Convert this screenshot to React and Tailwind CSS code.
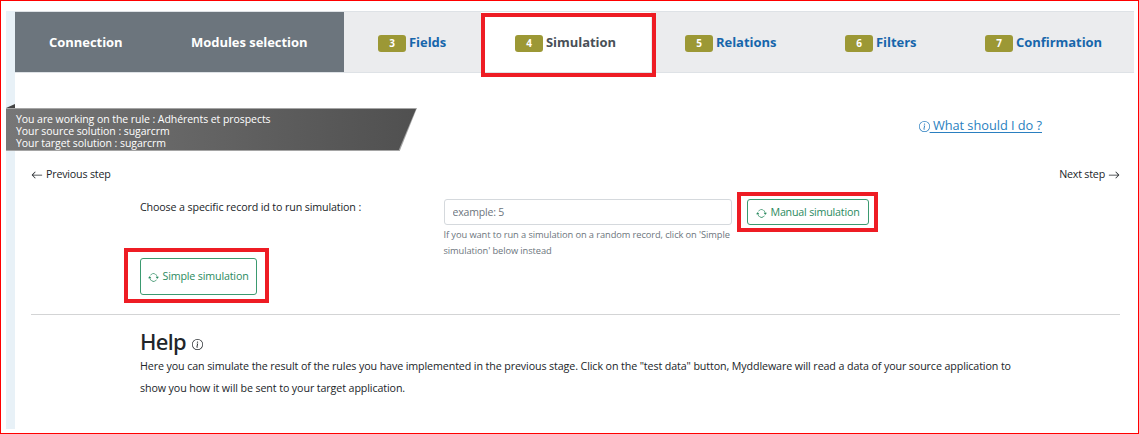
import React from "react";
import { BsInfoCircle, BsArrowRepeat, BsArrowLeft, BsArrowRight } from "react-icons/bs";

const tabs = [
  { label: "Connection", width: "w-[142px]", done: true },
  { label: "Modules selection", width: "w-[187px]", done: true },
  { label: "Fields", step: 3, width: "w-[137px]" },
  { label: "Simulation", step: 4, width: "w-[170px]", active: true },
  { label: "Relations", step: 5, width: "w-[160px]" },
  { label: "Filters", step: 6, width: "w-[140px]" },
  { label: "Confirmation", step: 7, width: "flex-1" },
];

function Tab({ label, step, width, done, active }) {
  const tone = done
    ? "bg-[#6c757d] text-white"
    : active
      ? "z-10 bg-white text-[#495057]"
      : "bg-[#ebecee] text-[#1766ab]";
  return (
    <div className={`relative flex shrink-0 items-center pl-[34px] ${width} ${tone}`}>
      {step && (
        <span className="mr-[3px] mt-[3px] flex h-[17px] w-[28px] shrink-0 items-center justify-center rounded-[3px] bg-[#9c9835] text-[10px] font-bold text-white">
          {step}
        </span>
      )}
      <span className="whitespace-nowrap text-[13px] font-bold leading-5 tracking-[-0.04px]">{label}</span>
      {active && <div className="absolute left-0 top-px h-[64px] w-[175px] border-4 border-[#ee1c24]" />}
    </div>
  );
}

export default function App() {
  return (
    <div className="flex h-[434px] w-[1139px] overflow-hidden border border-[#ff0000] bg-white pl-[5px] pt-[10px] font-['Open_Sans','Noto_Sans',sans-serif] text-[10.7px] text-[#212529]">
      <div className="h-[418px] w-[9px] shrink-0 bg-[#e8f1f7]" />
      <main className="w-[1119px] shrink-0">
        <nav className="flex h-[62px] border-y border-[#dee2e6]">
          {tabs.map((t) => (
            <Tab key={t.label} {...t} />
          ))}
        </nav>

        <header className="flex h-[78px] items-start justify-between pt-[31px]">
          <div className="-ml-[9px]">
            <div className="h-[4px] w-[9px] bg-[#444] [clip-path:polygon(0_100%,100%_0,100%_100%)]" />
            <div className="h-[43px] w-[411px] bg-[#a5a5a5] py-px [clip-path:polygon(0_0,100%_0,95.8%_100%,0_100%)]">
              <div className="h-[41px] w-[410px] whitespace-nowrap bg-linear-to-r from-[#777] to-[#505050] pl-[10px] pt-[4px] text-[10.5px] leading-[12.2px] tracking-[-0.06px] text-white [clip-path:polygon(0_0,100%_0,95.8%_100%,0_100%)]">
                <p>You are working on the rule : Adhérents et prospects</p>
                <p>Your source solution : sugarcrm</p>
                <p>Your target solution : sugarcrm</p>
              </div>
            </div>
          </div>
          <a className="mr-[92px] mt-[11px] flex items-center text-[12.8px] leading-5 tracking-[-0.04px] text-[#2a7fc0]">
            <BsInfoCircle className="mt-[3px] size-[11px]" />
            <span className="whitespace-pre underline underline-offset-2"> What should I do ?</span>
          </a>
        </header>

        <div className="ml-4 mr-[14px] flex h-[46px] items-center justify-between tracking-[-0.2px]">
          <span className="flex items-center gap-[3px]">
            <BsArrowLeft className="mt-[2px] size-[12px]" />
            Previous step
          </span>
          <span className="flex items-center gap-[3px]">
            Next step
            <BsArrowRight className="mt-[2px] size-[12px]" />
          </span>
        </div>

        <section className="ml-4 mr-[14px] h-[118px] border-b border-[#d3d4d5] pl-[109px] pt-[2px]">
          <div className="flex h-[59px] items-start">
            <label className="w-[303.5px] leading-4 tracking-[-0.13px]">
              Choose a specific record id to run simulation :
            </label>
            <div className="w-[288px]">
              <input
                className="block h-[26px] w-full rounded-[3px] border border-[#d5d9dd] px-2 text-[10.5px] tracking-[-0.17px] outline-none placeholder:text-[#6c757d]"
                placeholder="example: 5"
              />
              <p className="mt-[2px] whitespace-nowrap text-[9.3px] leading-4 tracking-[-0.09px] text-[#6c757d]">
                If you want to run a simulation on a random record, click on 'Simple
                <br />
                simulation' below instead
              </p>
            </div>
            <div className="relative ml-[15.5px]">
              <button className="flex h-[26px] w-[122px] items-center justify-center gap-[3px] whitespace-nowrap rounded-[3px] border border-[#3b9a70] tracking-[-0.2px] text-[#2b8a60]">
                <BsArrowRepeat className="mt-[2px] size-[11px]" />
                Manual simulation
              </button>
              <div className="absolute -left-[10px] -top-[7px] h-[40px] w-[141px] border-4 border-[#ee1c24]" />
            </div>
          </div>
          <div className="relative w-[117px]">
            <button className="flex h-[37px] w-[117px] items-center justify-center gap-[3px] whitespace-nowrap rounded-[3px] border border-[#3b9a70] tracking-[-0.16px] text-[#2b8a60]">
              <BsArrowRepeat className="mt-[2px] size-[11px]" />
              Simple simulation
            </button>
            <div className="absolute -left-[16px] -top-[10px] h-[55px] w-[145px] border-4 border-[#ee1c24]" />
          </div>
        </section>

        <section className="ml-[125px] pt-[13px]">
          <h2 className="flex h-[27px] items-center gap-[6px] font-['Noto_Sans',sans-serif] text-[22px] font-medium leading-[27px] tracking-[-0.7px]">
            Help
            <BsInfoCircle className="mt-[5px] size-[11px]" />
          </h2>
          <p className="whitespace-nowrap leading-[22px] tracking-[-0.107px]">
            Here you can simulate the result of the rules you have implemented in the previous stage. Click on the "test
            data" button, Myddleware will read a data of your source application to
            <br />
            show you how it will be sent to your target application.
          </p>
        </section>
      </main>
    </div>
  );
}
